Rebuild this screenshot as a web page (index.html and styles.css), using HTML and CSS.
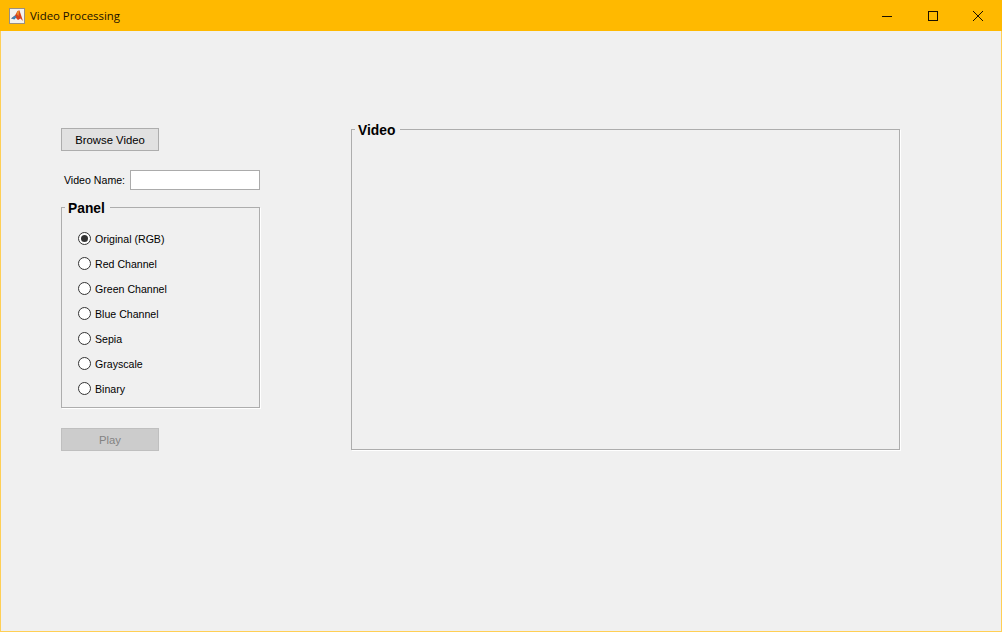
FILE: index.html
```
<!DOCTYPE html>
<html lang="en">
<head>
<meta charset="utf-8">
<title>Video Processing</title>
<link rel="stylesheet" href="styles.css">
</head>
<body>
<div class="window">
  <header class="titlebar">
    <svg class="app-icon" width="16" height="16" viewBox="0 0 16 16">
      <rect x="0.5" y="0.5" width="15" height="15" fill="#f4f2ee" stroke="#9a8f80"/>
      <path d="M2 10.5 L6 7.5 L8.5 3 L10.5 2.5 L14 13 L11.5 10.5 L9 12 L6.5 9.5 Z" fill="#d8421c"/>
      <path d="M2 10.5 L6 7.5 L7.5 9 L5.5 11.5 Z" fill="#3f7fb5"/>
      <path d="M8.5 3 L10.5 2.5 L9.5 8 L7.5 6 Z" fill="#e98a2a"/>
    </svg>
    <span class="title">Video Processing</span>
    <div class="controls">
      <button class="ctl" aria-label="Minimize"><svg width="12" height="12" viewBox="0 0 12 12"><path d="M1 6.5H11" stroke="#1a1000" fill="none"/></svg></button>
      <button class="ctl" aria-label="Maximize"><svg width="12" height="12" viewBox="0 0 12 12"><rect x="1.5" y="1.5" width="9" height="9" stroke="#1a1000" fill="none"/></svg></button>
      <button class="ctl" aria-label="Close"><svg width="12" height="12" viewBox="0 0 12 12"><path d="M1 1L11 11M11 1L1 11" stroke="#1a1000" fill="none"/></svg></button>
    </div>
  </header>
  <main class="content">
    <section class="left">
      <button class="btn">Browse Video</button>
      <div class="name-row">
        <label class="name-label" for="vn">Video Name:</label>
        <input class="name-input" id="vn" type="text">
      </div>
      <fieldset class="group panel">
        <legend>Panel</legend>
        <div class="radios">
          <label class="radio"><span class="dot on"></span>Original (RGB)</label>
          <label class="radio"><span class="dot"></span>Red Channel</label>
          <label class="radio"><span class="dot"></span>Green Channel</label>
          <label class="radio"><span class="dot"></span>Blue Channel</label>
          <label class="radio"><span class="dot"></span>Sepia</label>
          <label class="radio"><span class="dot"></span>Grayscale</label>
          <label class="radio"><span class="dot"></span>Binary</label>
        </div>
      </fieldset>
      <button class="btn disabled" disabled>Play</button>
    </section>
    <fieldset class="group video">
      <legend>Video</legend>
    </fieldset>
  </main>
</div>
</body>
</html>
```
FILE: styles.css
```
* { box-sizing: border-box; }
html, body { margin: 0; padding: 0; }
body {
  width: 1002px;
  height: 632px;
  overflow: hidden;
  font-family: "Liberation Sans", Arial, sans-serif;
  color: #000;
}
.window {
  width: 1002px;
  height: 632px;
  display: flex;
  flex-direction: column;
  background: #f0f0f0;
  border: 1px solid #ffcf55;
  border-top: 0;
}
.titlebar {
  height: 31px;
  flex: none;
  margin: 0 -1px;
  background: #ffb900;
  display: flex;
  align-items: center;
  padding-left: 9px;
}
.app-icon { flex: none; }
.title {
  margin-left: 5px;
  font-family: "Open Sans", "Liberation Sans", sans-serif;
  font-size: 11.4px;
  color: #1a1000;
}
.controls { margin-left: auto; margin-right: 1px; display: flex; }
.ctl {
  width: 45.5px;
  height: 31px;
  padding: 0;
  border: 0;
  background: none;
  display: flex;
  align-items: center;
  justify-content: center;
}
.content {
  flex: 1;
  display: flex;
  align-items: flex-start;
  padding: 89px 0 0 60px;
  gap: 90px;
}
.left {
  width: 200px;
  padding-top: 8px;
  display: flex;
  flex-direction: column;
  align-items: flex-start;
}
.btn {
  width: 98px;
  height: 23px;
  padding: 0;
  background: #e1e1e1;
  border: 1px solid #adadad;
  font-family: "Liberation Sans", Arial, sans-serif;
  font-size: 11.3px;
  color: #000;
}
.btn.disabled {
  background: #cccccc;
  border-color: #bfbfbf;
  color: #838383;
}
.name-row {
  margin-top: 19px;
  display: flex;
  align-items: center;
  height: 20px;
  width: 199px;
}
.name-label {
  font-size: 10.6px;
  margin-left: 3px;
  width: 66px;
  flex: none;
}
.name-input {
  width: 130px;
  height: 20px;
  background: #fff;
  border: 1px solid #ababab;
  padding: 0;
}
.group {
  margin: 0;
  padding: 0;
  min-width: 0;
  border: 1px solid #adadad;
  box-shadow: 1px 1px 0 #fff;
}
.group legend {
  margin-left: 3px;
  padding: 3px 5px 0 3px;
  font-size: 13.8px;
  font-weight: 700;
  line-height: 15px;
}
.panel {
  margin-top: 8px;
  width: 199px;
  height: 210px;
  margin-bottom: 20px;
}
.radios {
  display: flex;
  flex-direction: column;
  gap: 5px;
  padding: 13px 0 0 16px;
}
.radio {
  height: 20px;
  display: flex;
  align-items: center;
  font-size: 10.6px;
}
.dot {
  width: 13px;
  height: 13px;
  margin-right: 4px;
  margin-bottom: 1px;
  border: 1px solid #333;
  border-radius: 50%;
  background: #fff;
  flex: none;
  display: flex;
  align-items: center;
  justify-content: center;
}
.dot.on::after {
  content: "";
  width: 7px;
  height: 7px;
  border-radius: 50%;
  background: #333;
}
.video {
  width: 549px;
  height: 330px;
}
```
